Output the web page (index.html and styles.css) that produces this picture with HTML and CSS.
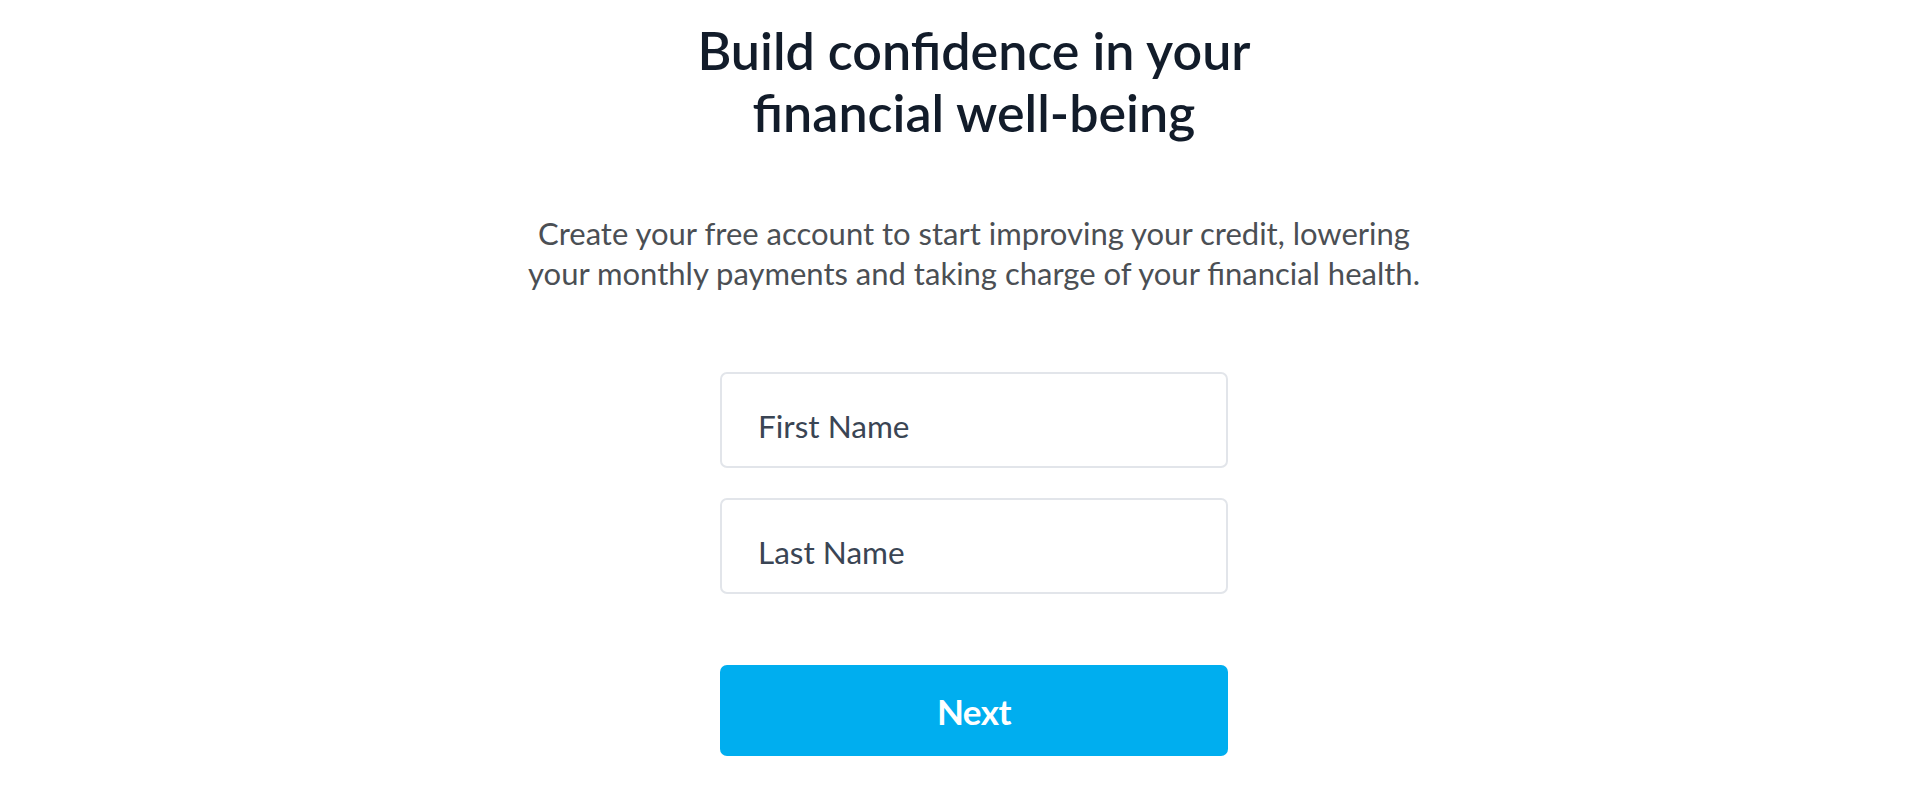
FILE: index.html
```html
<!DOCTYPE html>
<html lang="en">
<head>
<meta charset="utf-8">
<title>Create your free account</title>
<link rel="stylesheet" href="styles.css">
</head>
<body>
<main class="page">
  <h1 class="title">Build confidence in your<br>financial well-being</h1>
  <p class="lead">Create your free account to start improving your credit, lowering<br>your monthly payments and taking charge of your financial health.</p>
  <form class="form">
    <div class="field"><input class="input" type="text" placeholder="First Name"></div>
    <div class="field"><input class="input" type="text" placeholder="Last Name"></div>
    <button class="btn" type="button">Next</button>
  </form>
</main>
</body>
</html>
```

FILE: styles.css
```css
html, body {
  margin: 0;
  padding: 0;
  background: #ffffff;
}
body {
  font-family: Lato, "Open Sans", "Liberation Sans", sans-serif;
  -webkit-font-smoothing: antialiased;
}
.page {
  display: flex;
  flex-direction: column;
  align-items: center;
  padding-left: 28px;
  box-sizing: border-box;
  width: 1920px;
}
.title {
  margin: 19px 0 0;
  font-size: 52px;
  line-height: 62px;
  font-weight: 600;
  color: #121c2a;
  text-align: center;
}
.lead {
  margin: 70px 0 0;
  font-size: 31px;
  line-height: 40px;
  font-weight: 400;
  color: #4b4f54;
  text-align: center;
}
.form {
  margin-top: 79px;
  width: 508px;
  display: flex;
  flex-direction: column;
}
.field + .field {
  margin-top: 30px;
}
.input {
  display: block;
  box-sizing: border-box;
  width: 100%;
  height: 96px;
  margin: 0;
  padding: 12px 36px 0;
  border: 2px solid #e2e5ea;
  border-radius: 7px;
  background: #fff;
  font-family: Lato, "Open Sans", "Liberation Sans", sans-serif;
  font-size: 31.5px;
  color: #34404f;
  outline: none;
}
.input::placeholder {
  color: #3a4554;
  opacity: 1;
}
.btn {
  margin-top: 71px;
  height: 91px;
  width: 100%;
  border: 0;
  border-radius: 7px;
  background: #00aeef;
  color: #ffffff;
  font-family: Lato, "Open Sans", "Liberation Sans", sans-serif;
  font-size: 35px;
  font-weight: 700;
  letter-spacing: -0.5px;
  cursor: pointer;
}
```
